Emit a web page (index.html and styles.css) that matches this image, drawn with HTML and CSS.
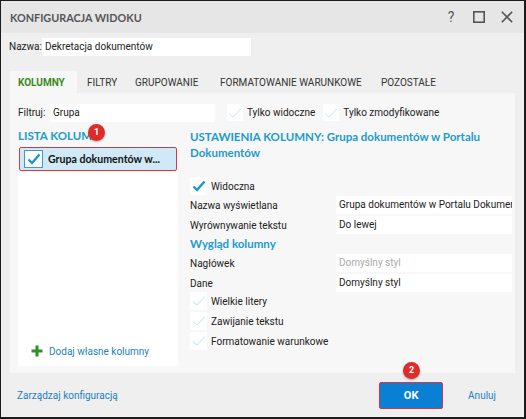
FILE: index.html
```html
<!DOCTYPE html>
<html lang="pl">
<head>
<meta charset="utf-8">
<link rel="stylesheet" href="styles.css">
</head>
<body>
<div class="window">
  <div class="titlebar">
    <div class="title">KONFIGURACJA WIDOKU</div>
    <div class="winbtns">
      <span class="wb help">?</span>
      <svg class="wb sq" width="12" height="12" viewBox="0 0 12 12"><rect x="0.8" y="0.8" width="10.4" height="10.4" fill="none" stroke="#555" stroke-width="1.6"/></svg>
      <svg class="wb" width="12" height="12" viewBox="0 0 12 12"><path d="M0.8 0.8 L11.2 11.2 M11.2 0.8 L0.8 11.2" stroke="#555" stroke-width="1.6"/></svg>
    </div>
  </div>
  <div class="namerow">
    <span class="lbl name">Nazwa:</span>
    <div class="input nameinput">Dekretacja dokumentów</div>
  </div>
  <div class="tabs">
    <div class="tab active">KOLUMNY</div>
    <div class="tab t2">FILTRY</div>
    <div class="tab t3">GRUPOWANIE</div>
    <div class="tab t4">FORMATOWANIE WARUNKOWE</div>
    <div class="tab t5">POZOSTAŁE</div>
  </div>
  <div class="panel">
    <div class="filterrow">
      <span class="lbl filt">Filtruj:</span>
      <div class="input filterinput">Grupa</div>
      <span class="cb light"><svg width="14" height="12" viewBox="0 0 14 12"><path d="M1 6.5 L5 10 L13 1.5" fill="none" stroke="#bfe3f5" stroke-width="1"/></svg></span>
      <span class="cbl">Tylko widoczne</span>
      <span class="cb light second"><svg width="14" height="12" viewBox="0 0 14 12"><path d="M1 6.5 L5 10 L13 1.5" fill="none" stroke="#bfe3f5" stroke-width="1"/></svg></span>
      <span class="cbl">Tylko zmodyfikowane</span>
    </div>
    <div class="cols">
      <div class="leftcol">
        <div class="heading">LISTA KOLUMN</div>
        <div class="list">
          <div class="item">
            <span class="cb on"><svg width="14" height="12" viewBox="0 0 14 12"><path d="M1.5 6.5 L5 10 L12.5 1.5" fill="none" stroke="#1a96d6" stroke-width="2.4"/></svg></span>
            <span class="itemtext">Grupa dokumentów w...</span>
          </div>
          <div class="spacer"></div>
          <div class="addrow">
            <svg width="12" height="12" viewBox="0 0 12 12"><path d="M6 0.5 V11.5 M0.5 6 H11.5" stroke="#2f8f2a" stroke-width="3"/></svg>
            <span class="link">Dodaj własne kolumny</span>
          </div>
        </div>
        <span class="badge b1">1</span>
      </div>
      <div class="rightcol">
        <div class="heading big">USTAWIENIA KOLUMNY: Grupa dokumentów w Portalu Dokumentów</div>
        <div class="cbrow first">
          <span class="cb box"><svg width="14" height="12" viewBox="0 0 14 12"><path d="M1.5 6.5 L5 10 L12.5 1.5" fill="none" stroke="#1a96d6" stroke-width="2.4"/></svg></span>
          <span class="cbl">Widoczna</span>
        </div>
        <div class="frow"><span class="flbl">Nazwa wyświetlana</span><div class="input fin">Grupa dokumentów w Portalu Dokumentów</div></div>
        <div class="frow"><span class="flbl">Wyrównywanie tekstu</span><div class="input fin">Do lewej</div></div>
        <div class="heading sub">Wygląd kolumny</div>
        <div class="frow"><span class="flbl">Nagłówek</span><div class="input fin ph">Domyślny styl</div></div>
        <div class="frow"><span class="flbl">Dane</span><div class="input fin">Domyślny styl</div></div>
        <div class="cbgroup">
          <div class="cbrow">
            <span class="cb box"><svg width="14" height="12" viewBox="0 0 14 12"><path d="M1 6.5 L5 10 L13 1.5" fill="none" stroke="#bfe3f5" stroke-width="1"/></svg></span>
            <span class="cbl">Wielkie litery</span>
          </div>
          <div class="cbrow">
            <span class="cb box"><svg width="14" height="12" viewBox="0 0 14 12"><path d="M1 6.5 L5 10 L13 1.5" fill="none" stroke="#bfe3f5" stroke-width="1"/></svg></span>
            <span class="cbl">Zawijanie tekstu</span>
          </div>
          <div class="cbrow">
            <span class="cb box"><svg width="14" height="12" viewBox="0 0 14 12"><path d="M1 6.5 L5 10 L13 1.5" fill="none" stroke="#bfe3f5" stroke-width="1"/></svg></span>
            <span class="cbl">Formatowanie warunkowe</span>
          </div>
        </div>
      </div>
    </div>
  </div>
  <div class="footer">
    <span class="link">Zarządzaj konfiguracją</span>
    <div class="okwrap">
      <button class="ok">OK</button>
      <span class="badge b2">2</span>
    </div>
    <span class="link cancel">Anuluj</span>
  </div>
</div>
</body>
</html>
```
FILE: styles.css
```css
* { box-sizing: border-box; }
html, body { margin: 0; padding: 0; background: #1b1b1b; }
body {
  width: 526px; height: 419px;
  font-family: "Roboto", "Open Sans", sans-serif;
  font-size: 10px;
  color: #222;
}
.window {
  width: 526px; height: 419px;
  border-style: solid;
  border-color: #1b1b1b;
  border-width: 1px 2px 2px 1px;
  background: #efefef;
  display: flex; flex-direction: column;
}
.titlebar {
  height: 32px;
  background: #e6e6e6;
  display: flex; align-items: center; justify-content: space-between;
  padding: 0 11px 0 9px;
}
.title { font-family: "Lato", sans-serif; font-weight: 700; font-size: 10.8px; color: #555; }
.winbtns { display: flex; align-items: center; }
.wb { display: block; }
.help { font-size: 14px; color: #555; width: 8px; text-align: center; line-height: 14px; }
.sq { margin: 0 16px 0 18px; }
.namerow {
  display: flex; align-items: center;
  padding: 3px 0 0 8px;
  height: 20px;
  margin-top: 2px;
}
.lbl { color: #222; flex-shrink: 0; }
.lbl.name { width: 33px; }
.lbl.filt { width: 32px; }
.input {
  background: #fff;
  height: 18px;
  line-height: 18px;
  padding: 0 3px;
  white-space: nowrap; overflow: hidden;
}
.nameinput { width: 209px; }
.tabs {
  display: flex;
  margin: 16px 0 0 9px;
  height: 22px;
}
.tab {
  padding: 0 0 0 10px;
  line-height: 23px;
  color: #333;
  font-size: 10px;
  white-space: nowrap;
}
.tab.active { background: #f7f7f7; color: #3a8a1e; font-weight: 700; padding: 0 0 0 8px; width: 67px; }
.t2 { width: 48px; }
.t3 { width: 85px; }
.t4 { width: 161px; }
.panel {
  margin: 0 9px 0 9px;
  background: #f7f7f7;
  height: 280px;
  padding: 10px 0 0 8px;
  display: flex; flex-direction: column;
}
.filterrow { display: flex; align-items: center; height: 19px; }
.filterinput { width: 165px; }
.cb {
  width: 16px; height: 17px;
  display: inline-flex; align-items: center; justify-content: center;
  background: #fff;
  flex-shrink: 0;
}
.cb.light { margin-left: 12px; }
.cb.light.second { margin-left: 8px; }
.cbl { margin-left: 4px; white-space: nowrap; }
.cols { display: flex; margin-top: 7px; flex: 1; }
.leftcol { width: 160px; flex-shrink: 0; position: relative; display: flex; flex-direction: column; }
.heading { font-family: "Lato", sans-serif; color: #1d9bcd; font-weight: 700; font-size: 11.5px; line-height: 14px; }
.heading.big { line-height: 16px; }
.list {
  background: #fff;
  margin-top: 2px;
  flex: 1;
  margin-bottom: 7px;
  display: flex; flex-direction: column;
  padding: 2px 1px 0 1px;
}
.item {
  height: 24px;
  background: #cfe9f6;
  border: 1px solid #e0343a;
  border-radius: 2px;
  display: flex; align-items: center;
  padding-left: 4px;
}
.cb.on { width: 19px; height: 18px; border: 1.5px solid #3a9bd8; }
.itemtext { font-family: "Lato", sans-serif; font-size: 10.6px; font-weight: 700; margin-left: 5px; color: #111; white-space: nowrap; }
.spacer { flex: 1; }
.addrow { display: flex; align-items: center; padding: 0 0 9px 12px; gap: 6px; }
.link { color: #1f7fc0; white-space: nowrap; }
.badge {
  position: absolute;
  width: 17px; height: 17px;
  border-radius: 50%;
  background: #e02b2b;
  color: #fff;
  font-weight: 700;
  font-size: 9px;
  text-align: center;
  line-height: 17px;
  box-shadow: 0 1px 2px rgba(0,0,0,0.3);
  z-index: 2;
}
.b1 { left: 70px; top: -5px; }
.rightcol { flex: 1; min-width: 0; padding-left: 12px; padding-right: 3px; }
.cbrow { display: flex; align-items: center; height: 20px; }
.cbrow.first { margin-top: 16px; height: 18px; }
.cbgroup { margin-top: -2px; }
.cb.box { width: 17px; height: 18px; }
.frow { display: flex; align-items: center; height: 20px; }
.flbl { width: 146px; flex-shrink: 0; }
.fin { flex: 1; }
.ph { color: #aaa; }
.heading.sub { line-height: 18px; }
.footer {
  flex: 1;
  display: flex; align-items: center;
  padding: 0 0 0 16px;
}
.okwrap { position: relative; margin-left: auto; }
.ok {
  width: 64px; height: 27px;
  background: #0a80d4;
  border: 1px solid #e0343a;
  border-radius: 2px;
  color: #fff;
  font-weight: 700;
  font-family: inherit;
  font-size: 11px;
  display: block;
}
.b2 { left: 24px; top: -20px; }
.cancel { margin: 0 28px 0 25px; }
```
